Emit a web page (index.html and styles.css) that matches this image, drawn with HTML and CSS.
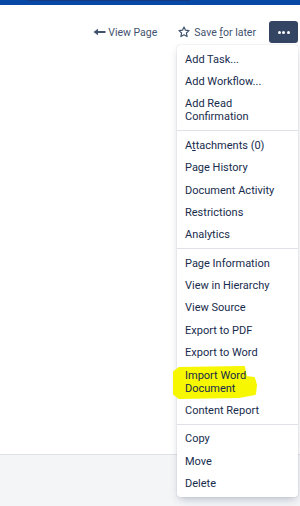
FILE: index.html
```html
<!DOCTYPE html>
<html lang="en">

<head>
    <meta charset="UTF-8">
    <meta name="viewport" content="width=device-width, initial-scale=1.0">
    <title>Page actions</title>
    <link rel="stylesheet" href="styles.css">
</head>

<body>

    <div class="topbar">
        <div class="topbar-search"></div>
    </div>

    <div class="page">
        <div class="page-actions">
            <a class="action" href="#">
                <svg class="icon icon-back" width="13" height="8" viewBox="0 0 13 8">
                    <path d="M0.5 4 L5 0.8 L5 2.9 L12.5 2.9 L12.5 5.1 L5 5.1 L5 7.2 Z" fill="#42526e"/>
                </svg>
                <span>View Page</span>
            </a>
            <a class="action action-save" href="#">
                <svg class="icon icon-star" width="12" height="12" viewBox="0 0 12 12">
                    <path d="M6 1 L7.5 4.2 L11 4.6 L8.4 7 L9.1 10.6 L6 8.8 L2.9 10.6 L3.6 7 L1 4.6 L4.5 4.2 Z" fill="none" stroke="#42526e" stroke-width="1.2" stroke-linejoin="round"/>
                </svg>
                <span>Save <u>f</u>or later</span>
            </a>

            <div class="more-wrap">
                <button class="more-btn"><span></span><span></span><span></span></button>

                <div class="menu">
                    <ul class="menu-group">
                        <li>Add Task...</li>
                        <li>Add Workflow...</li>
                        <li>Add Read<br>Confirmation</li>
                    </ul>
                    <ul class="menu-group">
                        <li>A<u>t</u>tachments (0)</li>
                        <li>Page History</li>
                        <li>Document Activity</li>
                        <li>Restrictions</li>
                        <li>Analytics</li>
                    </ul>
                    <ul class="menu-group">
                        <li>Page Information</li>
                        <li>View in Hierarchy</li>
                        <li>View Source</li>
                        <li>Export to PDF</li>
                        <li>Export to Word</li>
                        <li class="marked">
                            <svg class="marker" width="86" height="34" viewBox="0 0 86 34">
                                <path d="M1 6 L6 2 L71 1 L73 11 L81 12 L83 19 L82 28 L66 31 L6 32 L1 28 Z" fill="#f6f700" stroke="#f6f700" stroke-width="2" stroke-linejoin="round"/>
                            </svg>
                            <span>Import Word<br>Document</span>
                        </li>
                        <li>Content Report</li>
                    </ul>
                    <ul class="menu-group">
                        <li>Copy</li>
                        <li>Move</li>
                        <li>Delete</li>
                    </ul>
                </div>
            </div>
        </div>
    </div>

    <div class="page-footer"></div>

</body>

</html>
```

FILE: styles.css
```css
html, body {
    height: 100%;
}

body {
    margin: 0;
    font-family: Roboto, 'Liberation Sans', Arial, sans-serif;
    font-size: 11px;
    color: #172b4d;
    background-color: #fff;
    display: flex;
    flex-direction: column;
    overflow: hidden;
}

.topbar {
    height: 5px;
    background-color: #0747a6;
    padding-left: 27px;
}

.topbar-search {
    width: 163px;
    height: 1px;
    background-color: #163a80;
}

.page {
    flex: 1;
}

.page-actions {
    display: flex;
    justify-content: flex-end;
    align-items: center;
    margin-top: 16px;
    padding-right: 2px;
    height: 22px;
}

.action {
    display: flex;
    align-items: center;
    color: #42526e;
    font-size: 10.5px;
    text-decoration: none;
    margin-right: 21px;
}

.action-save {
    margin-right: 13px;
}

.icon {
    margin-right: 2px;
}

.icon-star {
    margin-right: 4px;
}

.more-wrap {
    position: relative;
}

.more-btn {
    width: 29px;
    height: 22px;
    border: none;
    border-radius: 3px;
    background-color: #344563;
    display: flex;
    justify-content: center;
    align-items: center;
    gap: 1.5px;
    padding: 0;
}

.more-btn span {
    width: 3px;
    height: 3px;
    border-radius: 50%;
    background-color: #fff;
}

.menu {
    position: absolute;
    top: 24px;
    right: 0;
    width: 121px;
    background-color: #fff;
    border-radius: 3px;
    box-shadow: 0 4px 8px -2px rgba(9, 30, 66, 0.25), 0 0 1px rgba(9, 30, 66, 0.31);
    z-index: 10;
}

.menu-group {
    list-style: none;
    margin: 0;
    padding: 3px 0 2px;
    border-top: 1px solid #dfe1e6;
}

.menu-group:first-child {
    border-top: none;
}

.menu-group li {
    padding: 4.7px 8px;
    line-height: 13px;
    white-space: nowrap;
}

.marked {
    position: relative;
}

.marked span {
    position: relative;
}

.marker {
    position: absolute;
    left: -4px;
    top: 2px;
}

.page-footer {
    height: 51px;
    background-color: #f4f5f7;
    border-top: 1px solid #dfe1e6;
}
```
